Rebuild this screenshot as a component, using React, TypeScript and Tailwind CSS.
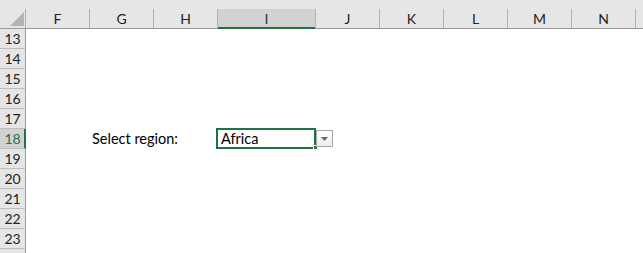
const cols = [
  { name: "F", w: "w-[64px]" },
  { name: "G", w: "w-[64px]" },
  { name: "H", w: "w-[64px]" },
  { name: "I", w: "w-[98px]", active: true },
  { name: "J", w: "w-[64px]" },
  { name: "K", w: "w-[64px]" },
  { name: "L", w: "w-[64px]" },
  { name: "M", w: "w-[64px]" },
  { name: "N", w: "w-[64px]" },
  { name: "", w: "w-[64px]" },
];

const rows = [13, 14, 15, 16, 17, 18, 19, 20, 21, 22, 23];

export default function App() {
  return (
    <div className="relative w-[643px] h-[253px] overflow-hidden bg-white font-['Lato','Liberation_Sans',sans-serif] text-[#222]">
      <div className="h-[9px] bg-[#e6e6e6]" />

      {/* column headers */}
      <div className="flex h-[20px] bg-[#e6e6e6] border-b border-[#9b9b9b]">
        <div className="w-[26px] shrink-0 border-r border-[#b1b1b1] flex justify-end items-end pr-[1px] pb-[2px]">
          <svg width="14" height="14" viewBox="0 0 14 14">
            <polygon points="14,0 14,14 0,14" fill="#b4b4b4" />
          </svg>
        </div>
        {cols.map((c) => (
          <div
            key={c.name || "O"}
            className={`${c.w} shrink-0 relative flex items-center justify-center text-[14px] leading-none border-r ${
              c.active ? "bg-[#d2d2d2] border-[#b1b1b1] text-[#333]" : "border-[#b1b1b1]"
            }`}
          >
            {c.name}
            {c.active && <span className="absolute left-0 right-0 -bottom-[1px] h-[2px] bg-[#217346]" />}
          </div>
        ))}
      </div>

      {/* rows */}
      {rows.map((r) => (
        <div key={r} className="flex h-[20px]">
          <div
            className={`w-[26px] shrink-0 flex items-center justify-center text-[14px] leading-none border-b border-[#bdbdbd] ${
              r === 18
                ? "bg-[#d2d2d2] text-[#217346] border-r-2 border-r-[#217346] pl-[1px]"
                : "bg-[#e6e6e6] border-r border-r-[#9b9b9b]"
            }`}
          >
            {r}
          </div>
          {r === 18 ? (
            <>
              <div className="w-[64px] shrink-0" />
              <div className="w-[128px] shrink-0 flex items-center pl-[2px] text-[14.5px] text-black">
                Select region:
              </div>
              <div className="w-[98px] shrink-0 flex items-center pl-[3px] text-[14.5px] text-black">
                Africa
              </div>
            </>
          ) : null}
        </div>
      ))}
      {/* row 24, only its top edge is in view */}
      <div className="w-[26px] h-[20px] bg-[#e6e6e6] border-r border-r-[#9b9b9b]" />

      {/* active cell selection */}
      <div className="absolute left-[216px] top-[128px] w-[100px] h-[21px] border-2 border-[#217346]" />
      <div className="absolute left-[313px] top-[145px] w-[5px] h-[5px] bg-[#217346] border border-white" />

      {/* data validation dropdown */}
      <div className="absolute left-[316px] top-[130px] w-[17px] h-[17px] border border-[#a6a6a6] bg-gradient-to-b from-white to-[#ececec] flex items-center justify-center">
        <svg width="7" height="4" viewBox="0 0 7 4">
          <polygon points="0,0 7,0 3.5,4" fill="#666" />
        </svg>
      </div>
    </div>
  );
}
